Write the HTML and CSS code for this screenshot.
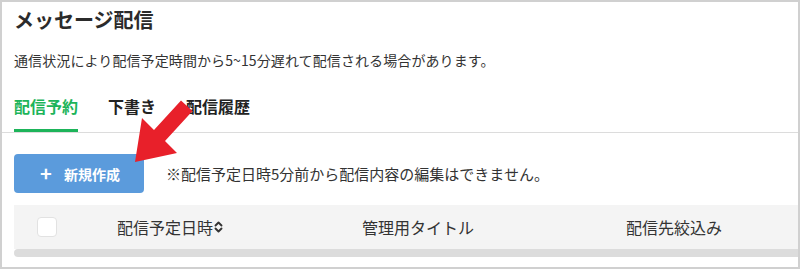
FILE: index.html
```html
<!DOCTYPE html>
<html lang="ja">
<head>
<meta charset="utf-8">
<title>メッセージ配信</title>
<link rel="stylesheet" href="styles.css">
</head>
<body>
<div class="frame">
  <div class="head">
    <h1 class="title">メッセージ配信</h1>
    <p class="lead">通信状況により配信予定時間から5~15分遅れて配信される場合があります。</p>
  </div>
  <nav class="tabs">
    <span class="tab active">配信予約</span>
    <span class="tab">下書き</span>
    <span class="tab">配信履歴</span>
  </nav>
  <div class="actions">
    <button class="btn-new"><span class="plus">+</span>新規作成</button>
    <span class="note">※配信予定日時5分前から配信内容の編集はできません。</span>
  </div>
  <div class="table">
    <div class="thead">
      <div class="cell cell-check"><span class="checkbox"></span></div>
      <div class="cell">配信予定日時<svg class="sort" viewBox="0 0 9 14" width="9" height="14"><path d="M1.5 5.5 L4.5 2.5 L7.5 5.5 M1.5 8.5 L4.5 11.5 L7.5 8.5" fill="none" stroke="#333" stroke-width="1.9" stroke-linecap="round" stroke-linejoin="round"/></svg></div>
      <div class="cell">管理用タイトル</div>
      <div class="cell">配信先絞込み</div>
    </div>
    <div class="scrollbar"></div>
  </div>
  <svg class="arrow" viewBox="120 90 90 80" width="90" height="80">
    <polygon points="135,162 142,118 154,130 181,100.5 192.5,111 165,141 177,153" fill="#e8202a"/>
  </svg>
</div>
</body>
</html>
```

FILE: styles.css
```css
* { box-sizing: border-box; }
html, body { margin: 0; padding: 0; background: #fff; }
body {
  font-family: "Noto Sans CJK JP", "Noto Sans", sans-serif;
  color: #333;
}
.frame {
  position: relative;
  width: 800px;
  height: 269px;
  border: 2px solid #d0d0d0;
  overflow: hidden;
}
.head { padding: 4px 12px 0; }
.title {
  margin: 0;
  font-size: 20px;
  line-height: 28px;
  font-weight: 700;
  color: #2b2b2b;
}
.lead {
  margin: 16px 0 0;
  font-size: 14px;
  line-height: 20px;
  letter-spacing: 0.1px;
  color: #333;
}
.tabs {
  display: flex;
  gap: 30px;
  margin-top: 24px;
  padding: 0 12px;
  border-bottom: 1px solid #dcdcdc;
}
.tab {
  font-size: 16px;
  font-weight: 700;
  line-height: 24px;
  padding-bottom: 11px;
  border-bottom: 3px solid transparent;
  color: #222;
}
.tab.active {
  color: #1db45a;
  border-bottom-color: #1db45a;
}
.actions {
  display: flex;
  align-items: center;
  gap: 22px;
  margin-top: 21px;
  padding: 0 12px;
}
.btn-new {
  width: 130px;
  height: 39px;
  border: none;
  border-radius: 4px;
  background: #5b9bdc;
  color: #fff;
  font-family: inherit;
  font-size: 14px;
  font-weight: 700;
  display: flex;
  align-items: center;
  justify-content: center;
  padding: 0 0 0 2px;
}
.plus {
  font-size: 20px;
  font-weight: 700;
  margin-right: 12px;
  line-height: 1;
  position: relative;
  top: -1px;
}
.note {
  font-size: 15px;
  line-height: 22px;
  color: #333;
}
.table {
  margin: 12px 0 0 12px;
  width: 800px;
}
.thead {
  display: grid;
  grid-template-columns: 103px 245px 264px 1fr;
  align-items: center;
  height: 44px;
  background: #f4f4f4;
  font-size: 16px;
  color: #333;
}
.cell { display: flex; align-items: center; }
.cell-check { padding-left: 23px; }
.checkbox {
  width: 20px;
  height: 20px;
  background: #fff;
  border: 1px solid #e2e2e2;
  border-radius: 4px;
}
.sort { margin-left: 1px; }
.scrollbar {
  height: 8px;
  background: #dcdcdc;
  border-radius: 4px 0 0 4px;
}
.arrow {
  position: absolute;
  left: 118px;
  top: 88px;
}
```
